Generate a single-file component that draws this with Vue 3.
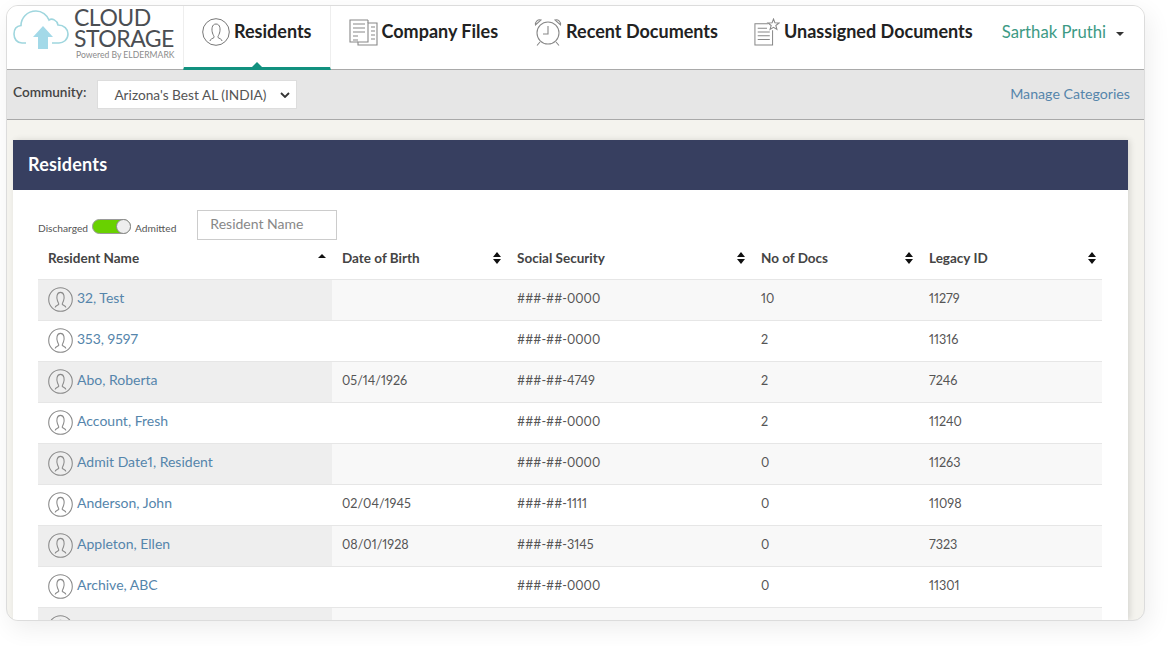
<script setup>
const tabs = [
  { label: 'Residents', icon: 'person', active: true },
  { label: 'Company Files', icon: 'files' },
  { label: 'Recent Documents', icon: 'clock' },
  { label: 'Unassigned Documents', icon: 'star' }
]

const columns = ['Resident Name', 'Date of Birth', 'Social Security', 'No of Docs', 'Legacy ID']

const residents = [
  { name: '32, Test', dob: '', ssn: '###-##-0000', docs: 10, legacy: 11279 },
  { name: '353, 9597', dob: '', ssn: '###-##-0000', docs: 2, legacy: 11316 },
  { name: 'Abo, Roberta', dob: '05/14/1926', ssn: '###-##-4749', docs: 2, legacy: 7246 },
  { name: 'Account, Fresh', dob: '', ssn: '###-##-0000', docs: 2, legacy: 11240 },
  { name: 'Admit Date1, Resident', dob: '', ssn: '###-##-0000', docs: 0, legacy: 11263 },
  { name: 'Anderson, John', dob: '02/04/1945', ssn: '###-##-1111', docs: 0, legacy: 11098 },
  { name: 'Appleton, Ellen', dob: '08/01/1928', ssn: '###-##-3145', docs: 0, legacy: 7323 },
  { name: 'Archive, ABC', dob: '', ssn: '###-##-0000', docs: 0, legacy: 11301 },
  { name: 'Archer, Sandra', dob: '', ssn: '###-##-0000', docs: 0, legacy: 11302 }
]
</script>

<template>
  <div class="page">
    <div class="window">
      <header class="topbar">
        <div class="logo">
          <svg class="logo-cloud" viewBox="0 0 56 40" width="56" height="40">
            <path d="M13 33 H9 C4 33 1 29 1 24 C1 19 4 16 8 15.500 C8 8 14 1 23 1 C29 1 34 5 36 10 C39 8 44 10 45 15 C51 15 55 19 55 24 C55 30 50 33 46 33 H39" fill="none" stroke="#9fd6de" stroke-width="1.600" />
            <path d="M30 16 L40 27 H35 V39 H25 V27 H20 Z" fill="#a3d9e8" />
          </svg>
          <div class="logo-text">
            <div class="logo-title">CLOUD</div>
            <div class="logo-title">STORAGE</div>
            <div class="logo-sub">Powered By ELDERMARK</div>
          </div>
        </div>
        <nav class="tabs">
          <a v-for="tab in tabs" :key="tab.label" class="tab" :class="{ active: tab.active }">
            <svg v-if="tab.icon === 'person'" class="tab-icon" viewBox="0 0 28 28" width="28" height="28" fill="none" stroke="#777" stroke-width="1">
              <circle cx="14" cy="14" r="13.300" />
              <path d="M8 23 C8 21 11 20.500 12 19.500 C12.500 18.500 11 17 10.500 15 C9.500 12 9.500 6 14 6 C18.500 6 18.500 12 17.500 15 C17 17 15.500 18.500 16 19.500 C17 20.500 20 21 20 23" />
            </svg>
            <svg v-else-if="tab.icon === 'files'" class="tab-icon" viewBox="0 0 29 28" width="29" height="28" fill="none" stroke="#888" stroke-width="1.100">
              <path d="M19 2 H1 V24 H9" />
              <path d="M19 2 V5 M4 6 H16 M4 10 H16 M4 14 H16 M4 18 H9" />
              <path d="M19 5 H28 V27 H9 V24 H19 Z" />
              <path d="M22 9 H26 M22 13 H26 M22 17 H26 M22 21 H26" />
              <path d="M4 22 H9" />
            </svg>
            <svg v-else-if="tab.icon === 'clock'" class="tab-icon" viewBox="0 0 28 28" width="28" height="28" fill="none" stroke="#888" stroke-width="1.100">
              <circle cx="14" cy="15" r="11" />
              <path d="M14 8 V16 H9" />
              <path d="M1.500 7 C1 3.500 4 1 7 2 Z M26.500 7 C27 3.500 24 1 21 2 Z" />
              <path d="M6 24 L3 27.500 M22 24 L25 27.500" />
            </svg>
            <svg v-else class="tab-icon" viewBox="0 0 28 30" width="26" height="28" fill="none" stroke="#888" stroke-width="1.100">
              <path d="M15 6 H1 V29 H20 V13" />
              <path d="M4 11 H14 M4 15 H17 M4 19 H17 M4 23 H17" />
              <path d="M21 1 L22.500 5 L27 5.300 L23.500 8 L24.700 12.300 L21 10 L17.300 12.300 L18.500 8 L15 5.300 L19.500 5 Z" fill="#fff" />
            </svg>
            <span>{{ tab.label }}</span>
          </a>
        </nav>
        <div class="user">
          <span>Sarthak Pruthi</span>
          <i class="user-caret"></i>
        </div>
      </header>

      <div class="toolbar">
        <label class="community-label">Community:</label>
        <div class="community-select">
          <span>Arizona's Best AL (INDIA)</span>
          <svg viewBox="0 0 10 6" width="10" height="6" fill="none" stroke="#333" stroke-width="1.800">
            <path d="M1 1 L5 5 L9 1" />
          </svg>
        </div>
        <a class="manage">Manage Categories</a>
      </div>

      <main class="content">
        <section class="card">
          <h2 class="card-title">Residents</h2>
          <div class="card-body">
            <div class="filters">
              <span class="switch-label">Discharged</span>
              <span class="switch"><i class="knob"></i></span>
              <span class="switch-label">Admitted</span>
              <div class="search">Resident Name</div>
            </div>

            <table class="grid">
              <colgroup>
                <col style="width: 294px" />
                <col style="width: 175px" />
                <col style="width: 244px" />
                <col style="width: 168px" />
                <col style="width: 183px" />
              </colgroup>
              <thead>
                <tr>
                  <th v-for="(col, i) in columns" :key="col">
                    <div class="th-inner">
                      <span>{{ col }}</span>
                      <svg v-if="i === 0" viewBox="0 0 8 12" width="8" height="12" fill="#111">
                        <path d="M4 2 L8 6 H0 Z" />
                      </svg>
                      <svg v-else viewBox="0 0 8 12" width="8" height="12" fill="#111">
                        <path d="M4 0 L8 5 H0 Z M0 7 H8 L4 12 Z" />
                      </svg>
                    </div>
                  </th>
                </tr>
              </thead>
              <tbody>
                <tr v-for="r in residents" :key="r.legacy">
                  <td class="name-cell">
                    <div class="name-inner">
                      <svg viewBox="0 0 28 28" width="25" height="25" fill="none" stroke="#8a8a8a" stroke-width="1.200">
                        <circle cx="14" cy="14" r="13.200" />
                        <path d="M8 23 C8 21 11 20.500 12 19.500 C12.500 18.500 11 17 10.500 15 C9.500 12 9.500 6 14 6 C18.500 6 18.500 12 17.500 15 C17 17 15.500 18.500 16 19.500 C17 20.500 20 21 20 23" />
                      </svg>
                      <a>{{ r.name }}</a>
                    </div>
                  </td>
                  <td>{{ r.dob }}</td>
                  <td>{{ r.ssn }}</td>
                  <td>{{ r.docs }}</td>
                  <td>{{ r.legacy }}</td>
                </tr>
              </tbody>
            </table>
          </div>
        </section>
      </main>
    </div>
  </div>
</template>

<style>
html, body {
  margin: 0;
  background: #fff;
}
</style>

<style scoped>
.page {
  width: 1170px;
  height: 646px;
  padding: 5px 25px 25px 6px;
  box-sizing: border-box;
  font-family: Lato, "Open Sans", sans-serif;
  font-variant-numeric: proportional-nums;
  color: #444;
  overflow: hidden;
}

.window {
  height: 616px;
  display: flex;
  flex-direction: column;
  background: #f4f3ee;
  border: 1px solid #dcdcdc;
  border-radius: 12px;
  box-sizing: border-box;
  box-shadow: 4px 8px 24px rgba(0, 0, 0, 0.07);
  overflow: hidden;
}

.topbar {
  height: 63px;
  flex: none;
  display: flex;
  align-items: stretch;
  background: #fff;
  border-bottom: 1px solid #a9a9a9;
}

.logo {
  width: 176px;
  flex: none;
  display: flex;
  padding: 2px 0 0 6px;
  box-sizing: border-box;
}

.logo-cloud {
  flex: none;
  margin-top: 2px;
}

.logo-text {
  margin: -2px 0 0 5px;
  padding-top: 1px;
}

.logo-title {
  font-size: 23px;
  line-height: 21px;
  letter-spacing: -0.5px;
  color: #4b4e53;
}

.logo-sub {
  margin: 1px 0 0 2px;
  font-size: 8.600px;
  line-height: 10px;
  color: #8b8b8b;
  white-space: nowrap;
}

.tabs {
  display: flex;
  align-items: stretch;
}

.tab {
  position: relative;
  display: flex;
  align-items: flex-start;
  gap: 4px;
  padding: 12px 18px 0;
  font-size: 18px;
  font-weight: 700;
  line-height: 26px;
  color: #222;
  white-space: nowrap;
  box-sizing: border-box;
}

.tab.active {
  border-left: 1px solid #eee;
  border-right: 1px solid #eee;
  border-bottom: 3px solid #12917f;
  margin-bottom: -1px;
}

.tab.active::after {
  content: "";
  position: absolute;
  left: 50%;
  bottom: 0;
  margin-left: -5px;
  border: 5px solid transparent;
  border-top: 0;
  border-bottom-color: #12917f;
}

.tab-icon {
  flex: none;
}

.user {
  margin-left: auto;
  display: flex;
  align-items: center;
  gap: 10px;
  padding: 0 20px 11px 0;
  font-size: 16.700px;
  color: #3d9a84;
  white-space: nowrap;
}

.user-caret {
  border: 4px solid transparent;
  border-top-color: #333;
  border-bottom: 0;
  margin-top: 3px;
}

.toolbar {
  height: 50px;
  flex: none;
  display: flex;
  align-items: center;
  padding: 0 14px 0 6px;
  box-sizing: border-box;
  background: #e6e6e6;
  border-bottom: 1px solid #a9a9a9;
}

.community-label {
  margin-top: -5px;
  font-size: 13.600px;
  font-weight: 600;
  color: #444;
}

.community-select {
  width: 200px;
  height: 29px;
  margin-left: 11px;
  display: flex;
  align-items: center;
  justify-content: space-between;
  padding: 0 6px 0 16px;
  box-sizing: border-box;
  background: #fff;
  border: 1px solid #ddd;
  font-size: 13.700px;
  color: #555;
}

.manage {
  margin-left: auto;
  margin-top: -3px;
  font-size: 14.200px;
  color: #5585ab;
}

.content {
  flex: 1;
  min-height: 0;
  padding: 20px 16px 0 6px;
}

.card {
  height: 100%;
  background: #fff;
  box-shadow: 2px 0 6px rgba(0, 0, 0, 0.12);
}

.card-title {
  margin: 0;
  height: 50px;
  padding-left: 15px;
  box-sizing: border-box;
  background: #373f60;
  color: #fff;
  font-size: 18px;
  font-weight: 700;
  letter-spacing: 0.2px;
  line-height: 48px;
}

.card-body {
  padding: 20px 26px 0 25px;
}

.filters {
  display: flex;
  align-items: center;
  height: 30px;
}

.switch-label {
  font-size: 10.200px;
  color: #555;
  margin-top: 5px;
}

.switch {
  position: relative;
  width: 39px;
  height: 15px;
  margin: 2px 4px 0;
  background: #69d100;
  border-radius: 8px;
  border: 1px solid #9a9a9a;
  box-sizing: border-box;
}

.knob {
  position: absolute;
  right: -1px;
  top: -1px;
  width: 15px;
  height: 15px;
  background: #eee;
  border: 1px solid #888;
  border-radius: 50%;
  box-sizing: border-box;
}

.search {
  width: 140px;
  height: 30px;
  margin-left: 21px;
  padding-left: 12px;
  box-sizing: border-box;
  border: 1px solid #ccc;
  font-size: 14px;
  line-height: 26px;
  color: #888;
}

.grid {
  width: 1064px;
  margin-top: 1px;
  border-collapse: collapse;
  table-layout: fixed;
}

th {
  height: 38px;
  padding: 0 6px 4px 10px;
  box-sizing: border-box;
  font-size: 13.500px;
  font-weight: 700;
  text-align: left;
  color: #444;
}

.th-inner {
  display: flex;
  align-items: center;
  justify-content: space-between;
}

td {
  height: 41px;
  padding: 0 10px 3px;
  box-sizing: border-box;
  font-size: 12.600px;
  color: #555;
  border-top: 1px solid #e6e6e6;
  border-bottom: 1px solid #e6e6e6;
}

tbody tr:nth-child(odd) td {
  background: #f8f8f8;
}

tbody tr:nth-child(odd) .name-cell {
  background: #eeeeee;
}

td.name-cell {
  padding-bottom: 0;
}

.name-inner {
  display: flex;
  align-items: center;
  gap: 4px;
}

.name-inner a {
  font-size: 14px;
  color: #5585ab;
  margin-top: -5px;
}
</style>
